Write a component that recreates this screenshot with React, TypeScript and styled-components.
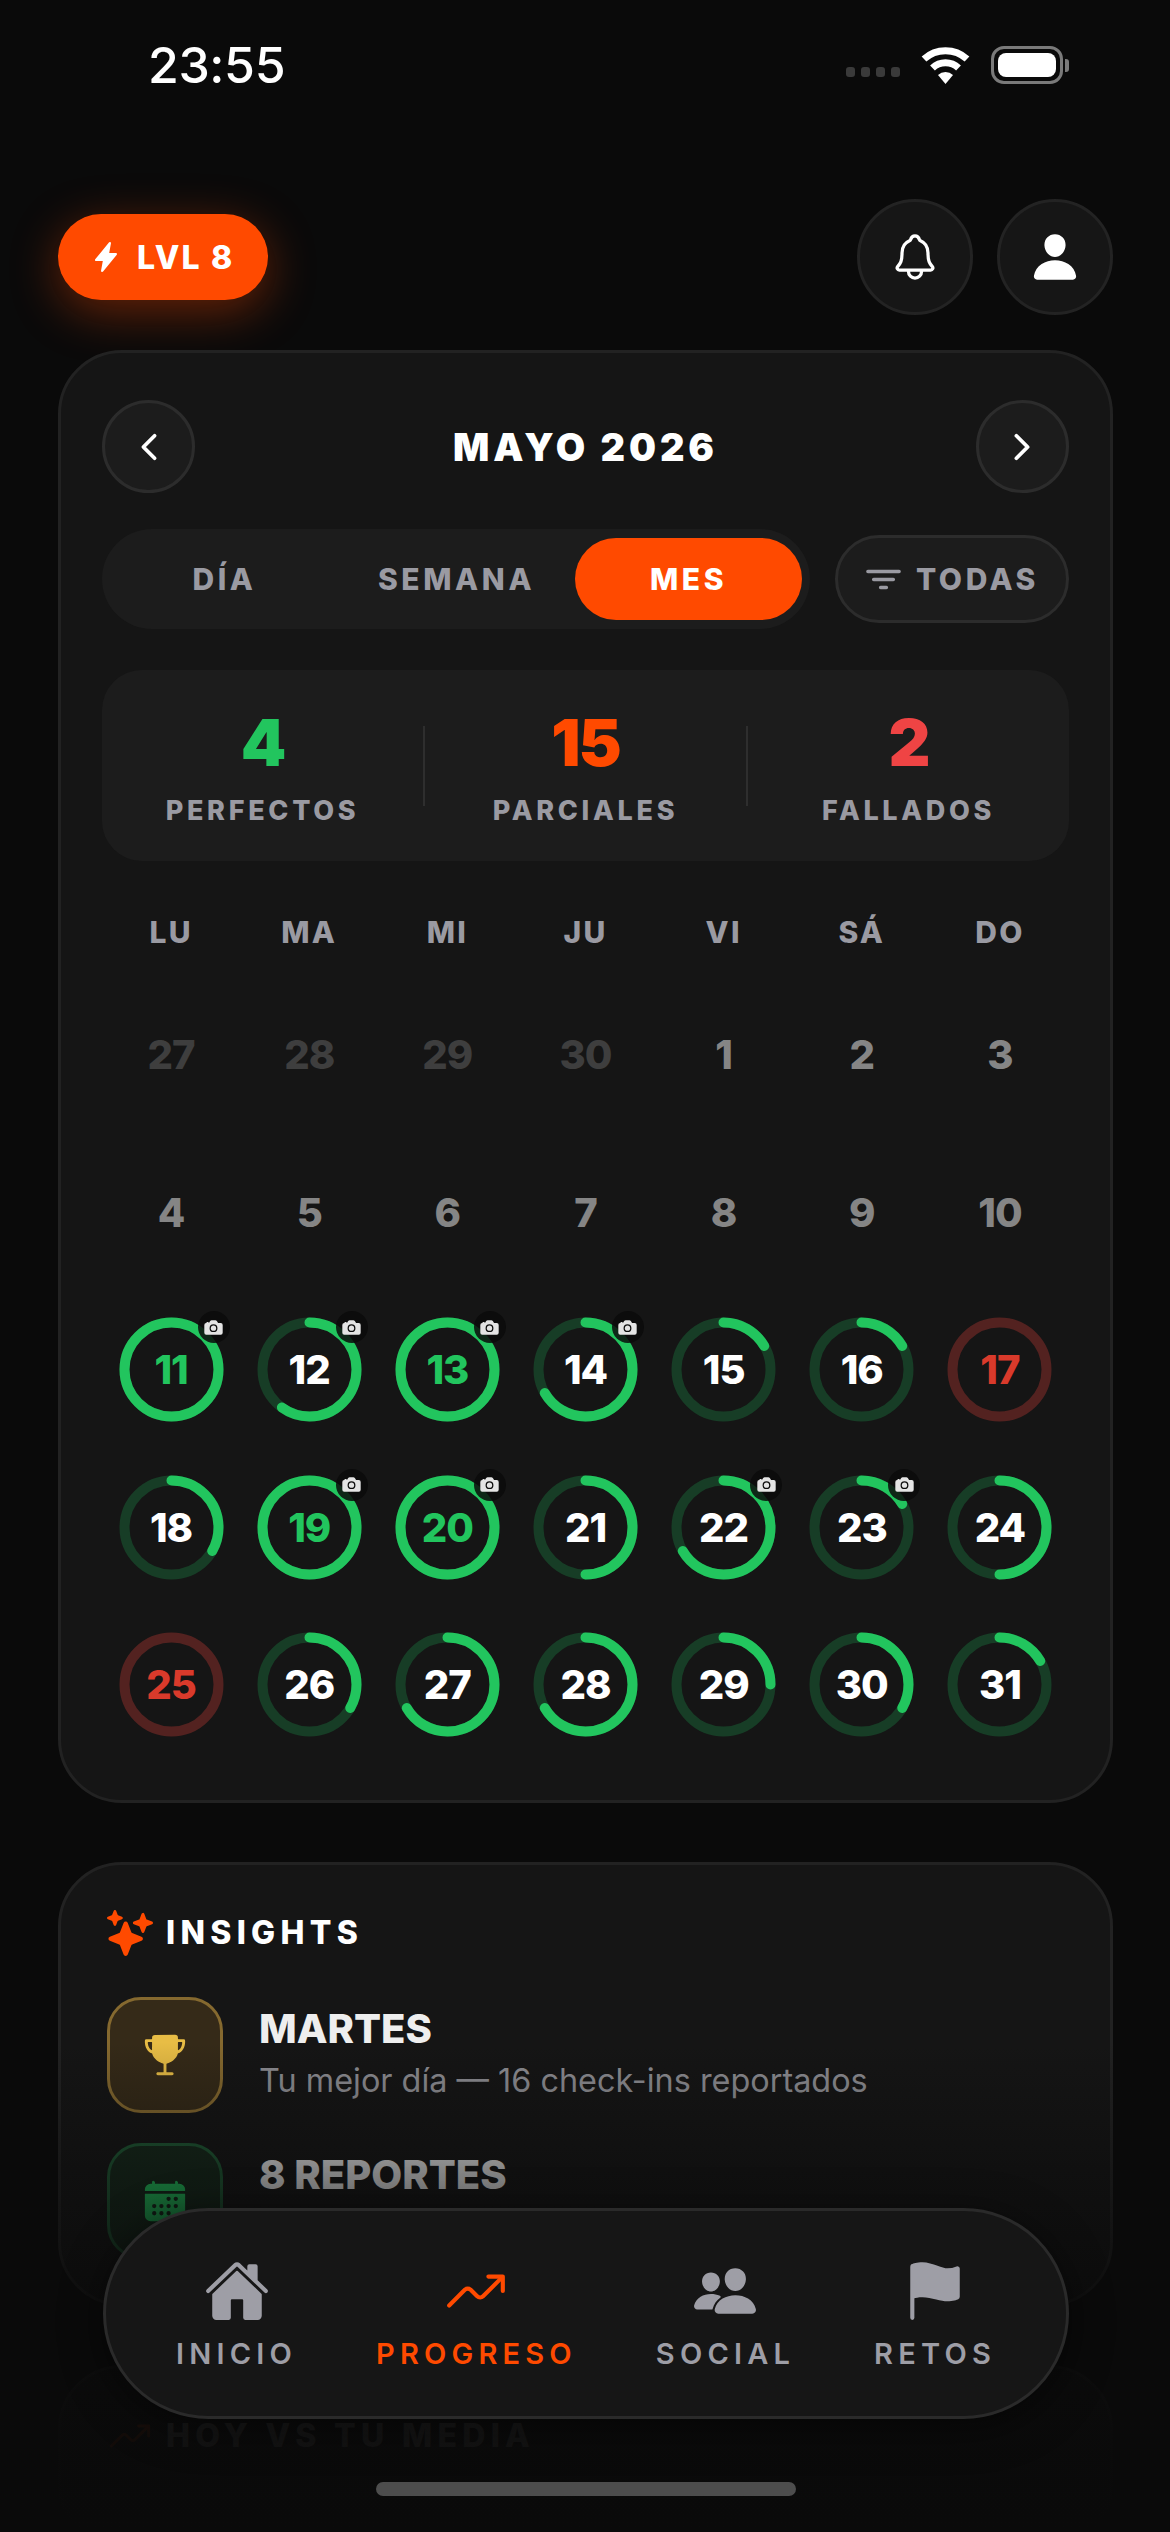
import React from 'react'
import styled, { createGlobalStyle } from 'styled-components'
import {
  IoCalendar,
  IoCamera,
  IoChevronBack,
  IoChevronForward,
  IoFilter,
  IoFlag,
  IoFlash,
  IoHome,
  IoNotificationsOutline,
  IoPeople,
  IoPerson,
  IoSparkles,
  IoTrendingUp,
  IoTrophy,
} from 'react-icons/io5'

const ORANGE = '#ff4a00'
const GREEN = '#22c55e'
const RED = '#ef4444'

const GlobalStyle = createGlobalStyle`
  html, body {
    margin: 0;
    padding: 0;
    background: #0a0a0a;
  }

  body {
    font-family: Inter, "Liberation Sans", sans-serif;
    color: #fff;
  }

  * {
    box-sizing: border-box;
  }
`

const Screen = styled.div`
  position: relative;
  width: 1170px;
  height: 2532px;
  overflow: hidden;
  background: #0a0a0a;
`

const StatusBar = styled.div`
  display: flex;
  align-items: center;
  justify-content: space-between;
  height: 130px;
  padding: 0 101px 0 148px;
`

const Time = styled.div`
  font-size: 50px;
  font-weight: 500;
  line-height: 1;
  letter-spacing: -0.4px;
`

const StatusIcons = styled.div`
  display: flex;
  align-items: center;
  gap: 21px;
`

const SignalDots = styled.div`
  display: flex;
  gap: 6px;
  margin-top: 14px;
`

const SignalDot = styled.span`
  width: 9px;
  height: 10px;
  background: #3a3a3a;
  border-radius: 3px;
`

const Battery = styled.div`
  display: flex;
  align-items: center;
`

const BatteryBody = styled.div`
  width: 72px;
  height: 38px;
  padding: 4px;
  border: 3px solid #7a7a7a;
  border-radius: 13px;

  &::before {
    display: block;
    height: 100%;
    background: #fff;
    border-radius: 8px;
    content: '';
  }
`

const BatteryNub = styled.div`
  width: 4px;
  height: 13px;
  margin-left: 2px;
  background: #7a7a7a;
  border-radius: 0 3px 3px 0;
`

const Content = styled.div`
  display: flex;
  flex-direction: column;
  padding: 69px 57px 0 58px;
`

const Header = styled.div`
  display: flex;
  align-items: center;
  justify-content: space-between;
  margin-bottom: 35px;
`

const LevelPill = styled.div`
  display: flex;
  align-items: center;
  gap: 15px;
  height: 86px;
  padding: 0 34px 0 32px;
  color: #fff;
  font-size: 32px;
  font-weight: 800;
  letter-spacing: 2.2px;
  background: ${ORANGE};
  border-radius: 43px;
  box-shadow: 0 12px 48px rgba(255, 74, 0, 0.38);
`

const HeaderActions = styled.div`
  display: flex;
  gap: 24px;
`

const RoundButton = styled.div<{ $size: number }>`
  display: flex;
  align-items: center;
  justify-content: center;
  width: ${({ $size }) => $size}px;
  height: ${({ $size }) => $size}px;
  color: #fff;
  background: ${({ $size }) => ($size > 100 ? '#161616' : '#1c1c1c')};
  border: 3px solid ${({ $size }) => ($size > 100 ? '#232323' : '#2c2c2c')};
  border-radius: 50%;
`

const Card = styled.section`
  padding: 47px 41px 36px;
  margin-bottom: 59px;
  background: #151515;
  border: 3px solid #222;
  border-radius: 64px;
`

const MonthRow = styled.div`
  display: flex;
  align-items: center;
  justify-content: space-between;
  margin-bottom: 36px;
`

const MonthTitle = styled.h1`
  margin: 0;
  font-size: 38px;
  font-weight: 900;
  letter-spacing: 3.9px;
`

const Controls = styled.div`
  display: flex;
  align-items: center;
  justify-content: space-between;
  margin-bottom: 41px;
`

const Tabs = styled.div`
  display: grid;
  grid-template-columns: repeat(3, 227px);
  gap: 5px;
  width: 708px;
  padding: 9px;
  background: #1c1c1c;
  border-radius: 50px;
`

const Tab = styled.div<{ $active?: boolean }>`
  display: flex;
  align-items: center;
  justify-content: center;
  height: 82px;
  color: ${({ $active }) => ($active ? '#fff' : '#9a9aa2')};
  font-size: 30px;
  font-weight: 800;
  letter-spacing: 3.6px;
  background: ${({ $active }) => ($active ? ORANGE : 'transparent')};
  border-radius: 41px;
`

const FilterButton = styled.div`
  display: flex;
  align-items: center;
  justify-content: center;
  gap: 14px;
  width: 234px;
  height: 88px;
  color: #9a9aa2;
  font-size: 30px;
  font-weight: 800;
  letter-spacing: 3.6px;
  background: #1c1c1c;
  border: 3px solid #2c2c2c;
  border-radius: 44px;
`

const Stats = styled.div`
  display: flex;
  align-items: center;
  height: 191px;
  margin-bottom: 47px;
  background: #1c1c1c;
  border-radius: 40px;
`

const Stat = styled.div`
  display: flex;
  flex: 1;
  flex-direction: column;
  align-items: center;
  gap: 14px;
`

const StatValue = styled.div<{ $color: string }>`
  color: ${({ $color }) => $color};
  font-size: 65px;
  font-weight: 900;
  line-height: 76px;
  letter-spacing: -2px;
`

const StatLabel = styled.div`
  color: #9a9aa2;
  font-size: 27px;
  font-weight: 800;
  line-height: 32px;
  letter-spacing: 3.7px;
`

const StatDivider = styled.div`
  width: 2px;
  height: 80px;
  background: #2e2e2e;
`

const Weekdays = styled.div`
  display: grid;
  grid-template-columns: repeat(7, 1fr);
  margin-bottom: 20px;
`

const Weekday = styled.div`
  color: #9a9aa2;
  font-size: 30px;
  font-weight: 800;
  line-height: 48px;
  text-align: center;
  letter-spacing: 2.2px;
`

const CalendarGrid = styled.div`
  display: grid;
  grid-template-columns: repeat(7, 1fr);
  grid-auto-rows: 157.5px;
`

const DayCell = styled.div`
  display: flex;
  align-items: center;
  justify-content: center;
`

const PlainDay = styled.div<{ $muted?: boolean }>`
  color: ${({ $muted }) => ($muted ? '#3e3e3e' : '#858585')};
  font-size: 40px;
  font-weight: 800;
  letter-spacing: -1px;
`

const RingWrap = styled.div`
  position: relative;
  display: grid;
  width: 105px;
  height: 105px;
  place-items: center;

  & > svg, & > span {
    grid-area: 1 / 1;
  }
`

const RingNumber = styled.span<{ $color: string }>`
  color: ${({ $color }) => $color};
  font-size: 40px;
  font-weight: 800;
  letter-spacing: -1px;
`

const CameraBadge = styled.div`
  position: absolute;
  top: -6px;
  right: -6px;
  display: flex;
  align-items: center;
  justify-content: center;
  width: 32px;
  height: 32px;
  color: #e4e4e4;
  background: rgba(10, 10, 10, 0.85);
  border-radius: 50%;
`

const SectionTitle = styled.div`
  display: flex;
  align-items: center;
  gap: 13px;
  margin-bottom: 39px;
  font-size: 32px;
  font-weight: 800;
  line-height: 50px;
  letter-spacing: 5.3px;
`

const InsightCard = styled(Card)`
  padding: 43px 43px 44px 46px;
`

const InsightList = styled.div`
  display: flex;
  flex-direction: column;
  gap: 30px;
`

const InsightRow = styled.div`
  display: flex;
  align-items: center;
  gap: 36px;
`

const InsightIcon = styled.div<{ $bg: string; $border: string; $color: string }>`
  display: flex;
  align-items: center;
  justify-content: center;
  width: 116px;
  height: 116px;
  color: ${({ $color }) => $color};
  background: ${({ $bg }) => $bg};
  border: 3px solid ${({ $border }) => $border};
  border-radius: 34px;
`

const InsightTitle = styled.div`
  color: #eee;
  font-size: 40px;
  font-weight: 800;
  line-height: 46px;
`

const InsightText = styled.div`
  margin-top: 6px;
  color: #8e8e93;
  font-size: 32.4px;
  font-weight: 400;
  line-height: 46px;
`

const BottomFade = styled.div`
  position: absolute;
  right: 0;
  bottom: 0;
  left: 0;
  height: 490px;
  background: linear-gradient(
    to bottom,
    rgba(10, 10, 10, 0) 0%,
    rgba(10, 10, 10, 0.47) 27%,
    rgba(10, 10, 10, 0.8) 53%,
    rgba(10, 10, 10, 0.96) 80%,
    #0a0a0a 100%
  );
`

const TabBar = styled.nav`
  position: absolute;
  top: 2208px;
  left: 103px;
  display: flex;
  justify-content: center;
  gap: 79px;
  width: 966px;
  height: 211px;
  padding-top: 47px;
  background: #161616;
  border: 3px solid #2a2a2a;
  border-radius: 106px;
  box-shadow: 0 8px 40px rgba(0, 0, 0, 0.5);
`

const TabItem = styled.div<{ $active?: boolean }>`
  display: flex;
  flex-direction: column;
  align-items: center;
  color: ${({ $active }) => ($active ? ORANGE : '#9e9ea6')};
`

const TabIcon = styled.div`
  display: flex;
  align-items: center;
  justify-content: center;
  height: 66px;
`

const TabLabel = styled.div`
  margin-top: 13px;
  font-size: 29px;
  font-weight: 600;
  line-height: 34px;
  letter-spacing: 5.2px;
`

const HomeIndicator = styled.div`
  position: absolute;
  top: 2482px;
  left: 376px;
  width: 420px;
  height: 14px;
  background: #4d4d4d;
  border-radius: 7px;
`

type DayState = 'muted' | 'plain' | 'perfect' | 'partial' | 'failed'

interface Day {
  n: number
  state: DayState
  progress?: number
  camera?: boolean
}

const third = 100 / 3
const sixth = 100 / 6

const days: Day[] = [
  { n: 27, state: 'muted' },
  { n: 28, state: 'muted' },
  { n: 29, state: 'muted' },
  { n: 30, state: 'muted' },
  ...[1, 2, 3, 4, 5, 6, 7, 8, 9, 10].map((n): Day => ({ n, state: 'plain' })),
  { n: 11, state: 'perfect', progress: 100, camera: true },
  { n: 12, state: 'partial', progress: 60, camera: true },
  { n: 13, state: 'perfect', progress: 100, camera: true },
  { n: 14, state: 'partial', progress: 2 * third, camera: true },
  { n: 15, state: 'partial', progress: sixth },
  { n: 16, state: 'partial', progress: sixth },
  { n: 17, state: 'failed', progress: 0 },
  { n: 18, state: 'partial', progress: third },
  { n: 19, state: 'perfect', progress: 100, camera: true },
  { n: 20, state: 'perfect', progress: 100, camera: true },
  { n: 21, state: 'partial', progress: 50 },
  { n: 22, state: 'partial', progress: 2 * third, camera: true },
  { n: 23, state: 'partial', progress: sixth, camera: true },
  { n: 24, state: 'partial', progress: 50 },
  { n: 25, state: 'failed', progress: 0 },
  { n: 26, state: 'partial', progress: third },
  { n: 27, state: 'partial', progress: 2 * third },
  { n: 28, state: 'partial', progress: 2 * third },
  { n: 29, state: 'partial', progress: 25 },
  { n: 30, state: 'partial', progress: third },
  { n: 31, state: 'partial', progress: sixth },
]

const numberColor: Record<string, string> = {
  perfect: GREEN,
  partial: '#fff',
  failed: '#d93a2b',
}

const Ring: React.FC<{ day: Day }> = ({ day }) => (
  <RingWrap>
    <svg width="105" height="105" viewBox="0 0 105 105">
      <circle
        cx="52.5"
        cy="52.5"
        r="47"
        fill="none"
        stroke={day.state === 'failed' ? '#532220' : '#173d26'}
        strokeWidth="10"
      />
      {!!day.progress && (
        <circle
          cx="52.5"
          cy="52.5"
          r="47"
          fill="none"
          stroke={GREEN}
          strokeWidth="10"
          strokeLinecap="round"
          pathLength={100}
          strokeDasharray={`${day.progress} 100`}
          transform="rotate(-90 52.5 52.5)"
        />
      )}
    </svg>
    <RingNumber $color={numberColor[day.state]}>{day.n}</RingNumber>
    {day.camera && (
      <CameraBadge>
        <IoCamera size={21} />
      </CameraBadge>
    )}
  </RingWrap>
)

const WifiIcon = () => (
  <svg width="49" height="37" viewBox="0 0 49 37" fill="none">
    <path d="M3 12 A32 32 0 0 1 46 12" stroke="#fff" strokeWidth="7" />
    <path d="M11.5 21 A19 19 0 0 1 37.5 21" stroke="#fff" strokeWidth="7" />
    <path d="M24.5 37 L17 28 A11 11 0 0 1 32 28 Z" fill="#fff" />
  </svg>
)

const App: React.FC = () => (
  <Screen>
    <GlobalStyle />
    <StatusBar>
      <Time>23:55</Time>
      <StatusIcons>
        <SignalDots>
          <SignalDot />
          <SignalDot />
          <SignalDot />
          <SignalDot />
        </SignalDots>
        <WifiIcon />
        <Battery>
          <BatteryBody />
          <BatteryNub />
        </Battery>
      </StatusIcons>
    </StatusBar>

    <Content>
      <Header>
        <LevelPill>
          <IoFlash size={32} />
          LVL 8
        </LevelPill>
        <HeaderActions>
          <RoundButton $size={116}>
            <IoNotificationsOutline size={52} />
          </RoundButton>
          <RoundButton $size={116}>
            <IoPerson size={52} />
          </RoundButton>
        </HeaderActions>
      </Header>

      <Card>
        <MonthRow>
          <RoundButton $size={93}>
            <IoChevronBack size={40} />
          </RoundButton>
          <MonthTitle>MAYO 2026</MonthTitle>
          <RoundButton $size={93}>
            <IoChevronForward size={40} />
          </RoundButton>
        </MonthRow>

        <Controls>
          <Tabs>
            <Tab>DÍA</Tab>
            <Tab>SEMANA</Tab>
            <Tab $active>MES</Tab>
          </Tabs>
          <FilterButton>
            <IoFilter size={37} />
            TODAS
          </FilterButton>
        </Controls>

        <Stats>
          <Stat>
            <StatValue $color={GREEN}>4</StatValue>
            <StatLabel>PERFECTOS</StatLabel>
          </Stat>
          <StatDivider />
          <Stat>
            <StatValue $color={ORANGE}>15</StatValue>
            <StatLabel>PARCIALES</StatLabel>
          </Stat>
          <StatDivider />
          <Stat>
            <StatValue $color={RED}>2</StatValue>
            <StatLabel>FALLADOS</StatLabel>
          </Stat>
        </Stats>

        <Weekdays>
          {['LU', 'MA', 'MI', 'JU', 'VI', 'SÁ', 'DO'].map(name => (
            <Weekday key={name}>{name}</Weekday>
          ))}
        </Weekdays>

        <CalendarGrid>
          {days.map((day, i) => (
            <DayCell key={i}>
              {day.state === 'muted' || day.state === 'plain'
                ? <PlainDay $muted={day.state === 'muted'}>{day.n}</PlainDay>
                : <Ring day={day} />}
            </DayCell>
          ))}
        </CalendarGrid>
      </Card>

      <InsightCard>
        <SectionTitle>
          <IoSparkles size={46} color={ORANGE} />
          INSIGHTS
        </SectionTitle>
        <InsightList>
          <InsightRow>
            <InsightIcon $bg="#352a18" $border="#85692f" $color="#e8bd45">
              <IoTrophy size={46} />
            </InsightIcon>
            <div>
              <InsightTitle>MARTES</InsightTitle>
              <InsightText>Tu mejor día — 16 check-ins reportados</InsightText>
            </div>
          </InsightRow>
          <InsightRow>
            <InsightIcon $bg="#15291b" $border="#1f5a35" $color={GREEN}>
              <IoCalendar size={46} />
            </InsightIcon>
            <div>
              <InsightTitle>8 REPORTES</InsightTitle>
              <InsightText>{'\u00a0'}</InsightText>
            </div>
          </InsightRow>
        </InsightList>
      </InsightCard>

      <InsightCard>
        <SectionTitle>
          <IoTrendingUp size={46} color={ORANGE} />
          HOY VS TU MEDIA
        </SectionTitle>
      </InsightCard>
    </Content>

    <BottomFade />

    <TabBar>
      <TabItem>
        <TabIcon><IoHome size={66} /></TabIcon>
        <TabLabel>INICIO</TabLabel>
      </TabItem>
      <TabItem $active>
        <TabIcon><IoTrendingUp size={66} /></TabIcon>
        <TabLabel>PROGRESO</TabLabel>
      </TabItem>
      <TabItem>
        <TabIcon><IoPeople size={66} /></TabIcon>
        <TabLabel>SOCIAL</TabLabel>
      </TabItem>
      <TabItem>
        <TabIcon><IoFlag size={66} /></TabIcon>
        <TabLabel>RETOS</TabLabel>
      </TabItem>
    </TabBar>

    <HomeIndicator />
  </Screen>
)

export default App
